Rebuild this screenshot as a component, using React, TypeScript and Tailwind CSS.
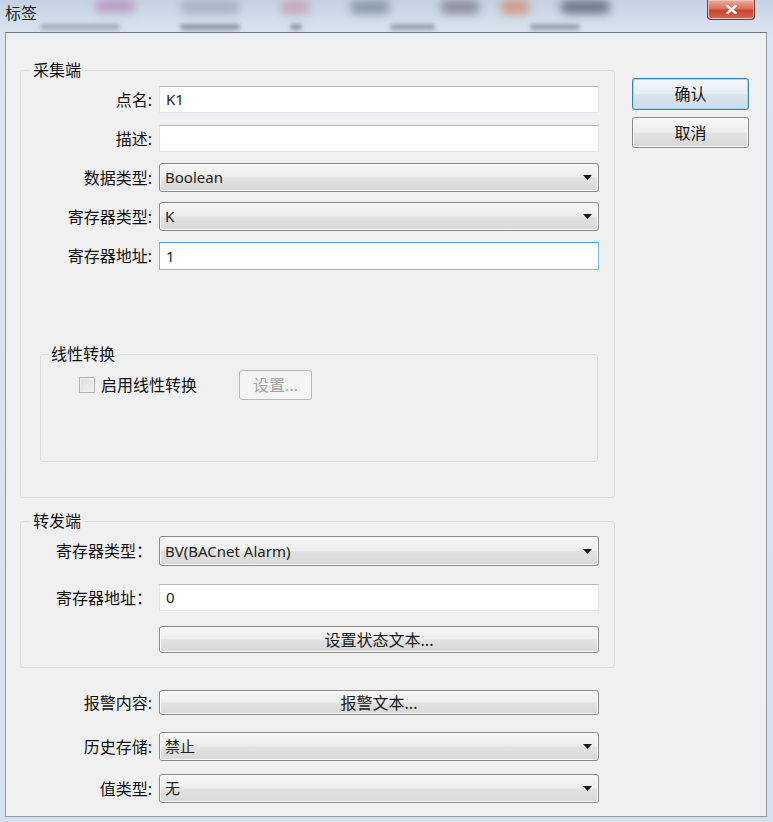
import React from 'react';

const FONT = "font-['Noto_Sans','Noto_Sans_CJK_SC',sans-serif]";

const Arrow = () => (
  <svg width="9" height="5" viewBox="0 0 9 5" className="shrink-0">
    <path d="M0 0 H9 L4.5 5 Z" fill="#1a1a1a" />
  </svg>
);

const TextBox: React.FC<{ value?: string; focused?: boolean }> = ({ value, focused }) => (
  <div
    className={
      focused
        ? 'w-[440px] h-[28px] flex items-center pl-[6px] bg-white border border-[#7eb4ea] border-t-[#569de5] text-[15px] text-[#222]'
        : 'w-[440px] h-[27px] flex items-center pl-[6px] bg-white border border-[#e0e3e8] border-t-[#b5b8bf] text-[15px] text-[#222]'
    }
  >
    {value}
  </div>
);

const Combo: React.FC<{ value: string; tall?: boolean }> = ({ value, tall }) => (
  <div
    className={
      (tall ? 'h-[30px] ' : 'h-[29px] ') +
      'w-[440px] flex items-center justify-between pl-[5px] pr-[6px] rounded-[3px] border border-[#8a8a8a] bg-[linear-gradient(to_bottom,#f7f7f7_0%,#eeeeee_48%,#e2e2e2_52%,#d8d8d8_100%)] shadow-[inset_0_0_0_1px_#fbfbfb] text-[15px] text-[#222]'
    }
  >
    <span className="leading-none">{value}</span>
    <Arrow />
  </div>
);

const WideButton: React.FC<{ label: string; h: string }> = ({ label, h }) => (
  <div
    className={
      h +
      ' w-[440px] flex items-center justify-center rounded-[3px] border border-[#8a8a8a] bg-[linear-gradient(to_bottom,#f7f7f7_0%,#eeeeee_48%,#e2e2e2_52%,#d8d8d8_100%)] shadow-[inset_0_0_0_1px_#fbfbfb] text-[16px] text-[#1a1a1a]'
    }
  >
    {label}
  </div>
);

const Row: React.FC<{ label: string; children: React.ReactNode; className?: string }> = ({
  label,
  children,
  className,
}) => (
  <div className={'flex items-center ' + (className ?? '')}>
    <div className="w-[131px] text-right text-[16px] leading-[20px] whitespace-nowrap">{label}</div>
    <div className="ml-[7px]">{children}</div>
  </div>
);

export default function App() {
  return (
    <div
      className={
        FONT +
        ' relative w-[773px] h-[822px] overflow-hidden bg-[linear-gradient(to_bottom,#c3d2e2_0px,#d3dfeb_22px,#dbe5ef_40px,#d5e1ec_100%)] text-[#111]'
      }
    >
      {/* blurred aero glass behind the title */}
      <div className="absolute left-0 top-0 w-[773px] h-[32px] pointer-events-none">
        <div className="absolute left-[95px] top-[0px] w-[40px] h-[12px] rounded-full bg-[#b99ac2] blur-[4px]" />
        <div className="absolute left-[180px] top-[0px] w-[60px] h-[14px] rounded-full bg-[#a8b4c4] blur-[4px]" />
        <div className="absolute left-[280px] top-[0px] w-[30px] h-[14px] rounded-full bg-[#c9a7bb] blur-[4px]" />
        <div className="absolute left-[350px] top-[0px] w-[40px] h-[14px] rounded-full bg-[#8b9aac] blur-[4px]" />
        <div className="absolute left-[440px] top-[0px] w-[40px] h-[14px] rounded-full bg-[#8f8f9e] blur-[4px]" />
        <div className="absolute left-[500px] top-[0px] w-[30px] h-[14px] rounded-full bg-[#d19a8a] blur-[4px]" />
        <div className="absolute left-[560px] top-[0px] w-[50px] h-[14px] rounded-full bg-[#6f7b8a] blur-[4px]" />
        <div className="absolute left-[40px] top-[24px] w-[80px] h-[6px] rounded-full bg-[#a4aeb9] blur-[2px]" />
        <div className="absolute left-[180px] top-[24px] w-[60px] h-[6px] rounded-full bg-[#8f99a4] blur-[2px]" />
        <div className="absolute left-[290px] top-[24px] w-[12px] h-[6px] rounded-full bg-[#8f99a4] blur-[2px]" />
        <div className="absolute left-[390px] top-[24px] w-[45px] h-[6px] rounded-full bg-[#98a2ad] blur-[2px]" />
        <div className="absolute left-[530px] top-[24px] w-[50px] h-[6px] rounded-full bg-[#98a2ad] blur-[2px]" />
      </div>

      {/* title bar */}
      <div className="relative h-[32px] flex items-start justify-between">
        <div className="pl-[5px] pt-[3px] text-[16px] leading-[20px] text-[#222]">标签</div>
        <div className="mr-[18px] w-[48px] h-[20px] flex items-center justify-center rounded-b-[4px] border border-t-0 border-[#8b3224] bg-[linear-gradient(to_bottom,#eab0a2_0%,#dc6f5b_45%,#c7432d_55%,#d46a55_100%)] shadow-[inset_0_0_0_1px_#f2c2b6]">
          <svg width="11" height="9" viewBox="0 0 11 9">
            <path d="M1.5 1 L9.5 8 M9.5 1 L1.5 8" stroke="#fff" strokeWidth="2.4" strokeLinecap="square" />
          </svg>
        </div>
      </div>

      {/* client area */}
      <div className="ml-[5px] w-[762px] h-[785px] border border-[#8e9db0] border-t-[#6b7886] bg-[#f0f0f0] flex">
        <div className="pl-[14px] pt-[27px] w-[609px]">
          {/* 采集端 */}
          <fieldset className="w-[595px] border border-[#d9dcdf] rounded-[3px] pb-[35px]">
            <legend className="ml-[9px] px-[3px] text-[16px] leading-[20px]">采集端</legend>
            <div className="flex flex-col">
              <Row label="点名:" className="h-[39px]">
                <TextBox value="K1" />
              </Row>
              <Row label="描述:" className="h-[39px]">
                <TextBox />
              </Row>
              <Row label="数据类型:" className="h-[39px]">
                <Combo value="Boolean" />
              </Row>
              <Row label="寄存器类型:" className="h-[39px]">
                <Combo value="K" />
              </Row>
              <Row label="寄存器地址:" className="h-[40px]">
                <TextBox value="1" focused />
              </Row>
            </div>

            {/* 线性转换 */}
            <fieldset className="mt-[68px] ml-[19px] w-[558px] border border-[#d9dcdf] rounded-[3px] pb-[61px]">
              <legend className="ml-[7px] px-[3px] text-[16px] leading-[20px]">线性转换</legend>
              <div className="mt-[6px] h-[30px] flex items-center">
                <div className="ml-[38px] w-[16px] h-[16px] border border-[#b4b4b4] bg-[linear-gradient(135deg,#dcdcdc,#f4f4f4)] shadow-[inset_0_0_0_1px_#eeeeee]" />
                <span className="ml-[6px] text-[16px] leading-[20px]">启用线性转换</span>
                <div className="ml-[42px] w-[73px] h-[30px] flex items-center justify-center rounded-[3px] border border-[#b5b9bd] bg-[#f4f4f4] text-[16px] text-[#a3a3a3]">
                  设置...
                </div>
              </div>
            </fieldset>
          </fieldset>

          {/* 转发端 */}
          <fieldset className="mt-[13px] w-[595px] border border-[#d9dcdf] rounded-[3px] pb-[14px]">
            <legend className="ml-[9px] px-[3px] text-[16px] leading-[20px]">转发端</legend>
            <Row label="寄存器类型：" className="mt-[5px]">
              <Combo value="BV(BACnet Alarm)" tall />
            </Row>
            <Row label="寄存器地址：" className="mt-[18px]">
              <TextBox value="0" />
            </Row>
            <Row label="" className="mt-[15px]">
              <WideButton label="设置状态文本..." h="h-[27px]" />
            </Row>
          </fieldset>

          {/* alarm / history */}
          <div className="pl-[1px]">
            <Row label="报警内容:" className="mt-[22px]">
              <WideButton label="报警文本..." h="h-[25px]" />
            </Row>
            <Row label="历史存储:" className="mt-[17px]">
              <Combo value="禁止" />
            </Row>
            <Row label="值类型:" className="mt-[13px]">
              <Combo value="无" />
            </Row>
          </div>
        </div>

        {/* dialog buttons */}
        <div className="ml-[17px] pt-[45px] flex flex-col">
          <div className="w-[117px] h-[32px] flex items-center justify-center rounded-[3px] border border-[#3c7fb1] bg-[linear-gradient(to_bottom,#f2f7fa_0%,#e8eff4_48%,#d9e4ec_52%,#cfdbe5_100%)] shadow-[inset_0_0_0_1px_#a7d6f2] text-[16px]">
            确认
          </div>
          <div className="mt-[7px] w-[117px] h-[31px] flex items-center justify-center rounded-[3px] border border-[#8a8a8a] bg-[linear-gradient(to_bottom,#f7f7f7_0%,#eeeeee_48%,#e2e2e2_52%,#d8d8d8_100%)] shadow-[inset_0_0_0_1px_#fbfbfb] text-[16px]">
            取消
          </div>
        </div>
      </div>
    </div>
  );
}
